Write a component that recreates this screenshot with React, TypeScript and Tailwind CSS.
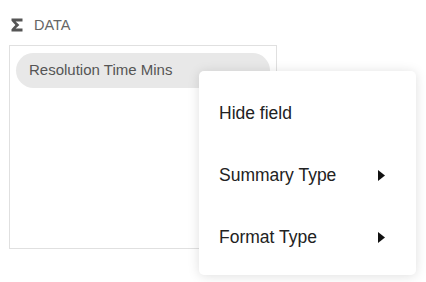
import React from "react";

export default function App() {
  const items = [
    { label: "Hide field", sub: false },
    { label: "Summary Type", sub: true },
    { label: "Format Type", sub: true },
  ];
  return (
    <div className="relative w-[426px] h-[282px] bg-white overflow-hidden" style={{ fontFamily: '"Liberation Sans", Arial, sans-serif' }}>
      <div className="pl-[9px] pt-[14px]">
        <div className="flex items-center h-[22px] pl-[2px]">
          <svg width="12" height="14" viewBox="0 0 12 14" className="mr-[11px]">
            <path d="M0.5 0.5 H11.5 V3.5 H4.6 L8.4 7 L4.6 10.5 H11.5 V13.5 H0.5 V11.2 L4.4 7 L0.5 2.8 Z" fill="#555" />
          </svg>
          <span className="text-[14.5px] text-[#666] leading-none">DATA</span>
        </div>
        <div className="mt-[9px] w-[268px] h-[204px] border border-[#e0e0e0] px-[6px] pt-[7px]">
          <div className="h-[35px] w-[254px] rounded-full bg-[#e8e8e8] flex items-center pl-[13px] text-[15px] text-[#555]">
            Resolution Time Mins
          </div>
        </div>
      </div>
      <div className="absolute left-[199px] top-[71px] w-[217px] h-[204px] bg-white rounded-[5px] shadow-[0_1px_12px_rgba(0,0,0,0.13)] pt-[11px] pb-[7px]">
        {items.map((it) => (
          <div key={it.label} className="h-[62px] flex items-center justify-between pl-[20px] pr-[31px] text-[17.5px] text-[#222]">
            <span>{it.label}</span>
            {it.sub && (
              <svg width="7" height="11" viewBox="0 0 7 11">
                <polygon points="0,0 7,5.5 0,11" fill="#111" />
              </svg>
            )}
          </div>
        ))}
      </div>
    </div>
  );
}
